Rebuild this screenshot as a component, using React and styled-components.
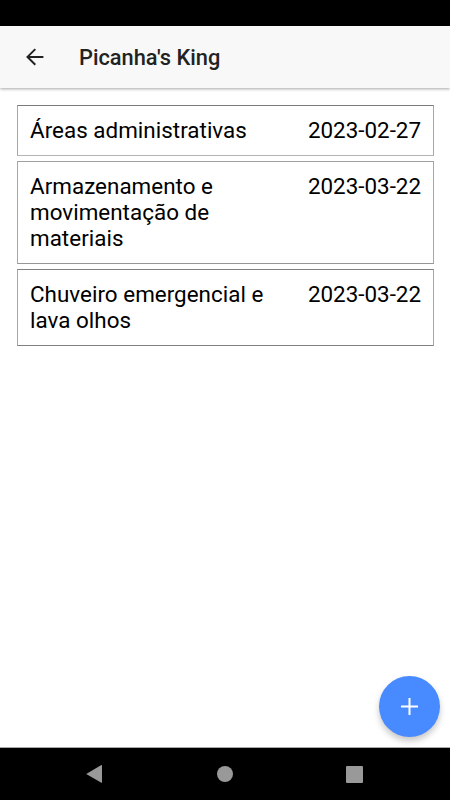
import React from 'react';
import styled, { createGlobalStyle } from 'styled-components';

const items = [
  { name: 'Áreas administrativas', date: '2023-02-27', line: '#7a7a7a', bottom: '#b4b4b4' },
  { name: 'Armazenamento e movimentação de materiais', date: '2023-03-22', line: '#a0a0a0', bottom: '#969696' },
  { name: 'Chuveiro emergencial e lava olhos', date: '2023-03-22', line: '#808080', bottom: '#808080' },
];

const App = () => (
  <Screen>
    <GlobalStyle />
    <StatusBar />
    <Toolbar>
      <BackButton aria-label="back">
        <svg width="18" height="18" viewBox="0 0 18 18" fill="none" stroke="#222" strokeWidth="2">
          <path d="M9.3 1.1L1.5 8.9l7.8 7.8M1.7 8.9H17.4" />
        </svg>
      </BackButton>
      <Title>Picanha's King</Title>
    </Toolbar>
    <List>
      {items.map(item => (
        <Item key={item.name} $line={item.line} $bottom={item.bottom}>
          <Name>{item.name}</Name>
          <DateText>{item.date}</DateText>
        </Item>
      ))}
    </List>
    <AddButton aria-label="add">
      <svg width="17" height="17" viewBox="0 0 17 17" stroke="#fff" strokeWidth="2">
        <path d="M8.5 0V17M0 8.5H17" />
      </svg>
    </AddButton>
    <NavBar>
      <svg width="17" height="20" viewBox="0 0 17 20" fill="#999">
        <path d="M0.2 9.9L15.4 1Q16 .8 16 1.5V18.3Q16 19 15.4 18.8Z" />
      </svg>
      <HomeDot />
      <RecentSquare />
    </NavBar>
  </Screen>
);

const GlobalStyle = createGlobalStyle`
  body {
    margin: 0;
    background: #fff;
    font-family: Roboto, sans-serif;
  }
`;

const Screen = styled.div`
  position: relative;
  display: grid;
  grid-template-rows: 26px 62px 1fr 53px;
  box-sizing: border-box;
  width: 450px;
  height: 800px;
  overflow: hidden;
`;

const StatusBar = styled.div`
  background: #000;
`;

const Toolbar = styled.header`
  display: flex;
  align-items: center;
  background: #f8f8f8;
  box-shadow: 0 1px 3px rgba(0, 0, 0, 0.35);
`;

const BackButton = styled.button`
  display: flex;
  margin: 0 0 0 26px;
  padding: 0;
  border: 0;
  background: none;
`;

const Title = styled.h1`
  margin: 0 0 0 35px;
  padding-top: 2px;
  color: #222;
  font-size: 21.8px;
  font-weight: 500;
  line-height: 26px;
`;

const List = styled.main`
  display: flex;
  flex-direction: column;
  gap: 5px;
  padding: 17px 16px 0 17px;
`;

const Item = styled.div`
  display: flex;
  justify-content: space-between;
  align-items: flex-start;
  box-sizing: border-box;
  padding: 11px 12px 11.7px;
  border: 1px solid #a8a8a8;
  border-top-color: ${props => props.$line};
  border-bottom-color: ${props => props.$bottom};
  color: #000;
  font-size: 22.4px;
  line-height: 26.2px;
`;

const Name = styled.span`
  width: 240px;
  letter-spacing: 0.03px;
`;

const DateText = styled.span`
  white-space: nowrap;
`;

const AddButton = styled.button`
  position: absolute;
  right: 10px;
  bottom: 63px;
  display: flex;
  justify-content: center;
  align-items: center;
  width: 61px;
  height: 61px;
  padding: 0;
  border: 0;
  border-radius: 50%;
  background: #488aff;
  box-shadow: 0 4px 6px rgba(0, 0, 0, 0.22);
`;

const NavBar = styled.footer`
  display: flex;
  justify-content: space-between;
  align-items: center;
  box-sizing: border-box;
  padding: 0 87px 0 86px;
  border-top: 1px solid #a8a8a8;
  background: #000;
`;

const HomeDot = styled.span`
  width: 16px;
  height: 16px;
  border-radius: 50%;
  background: #999;
`;

const RecentSquare = styled.span`
  width: 17px;
  height: 17px;
  border-radius: 1px;
  background: #999;
`;

export default App;
